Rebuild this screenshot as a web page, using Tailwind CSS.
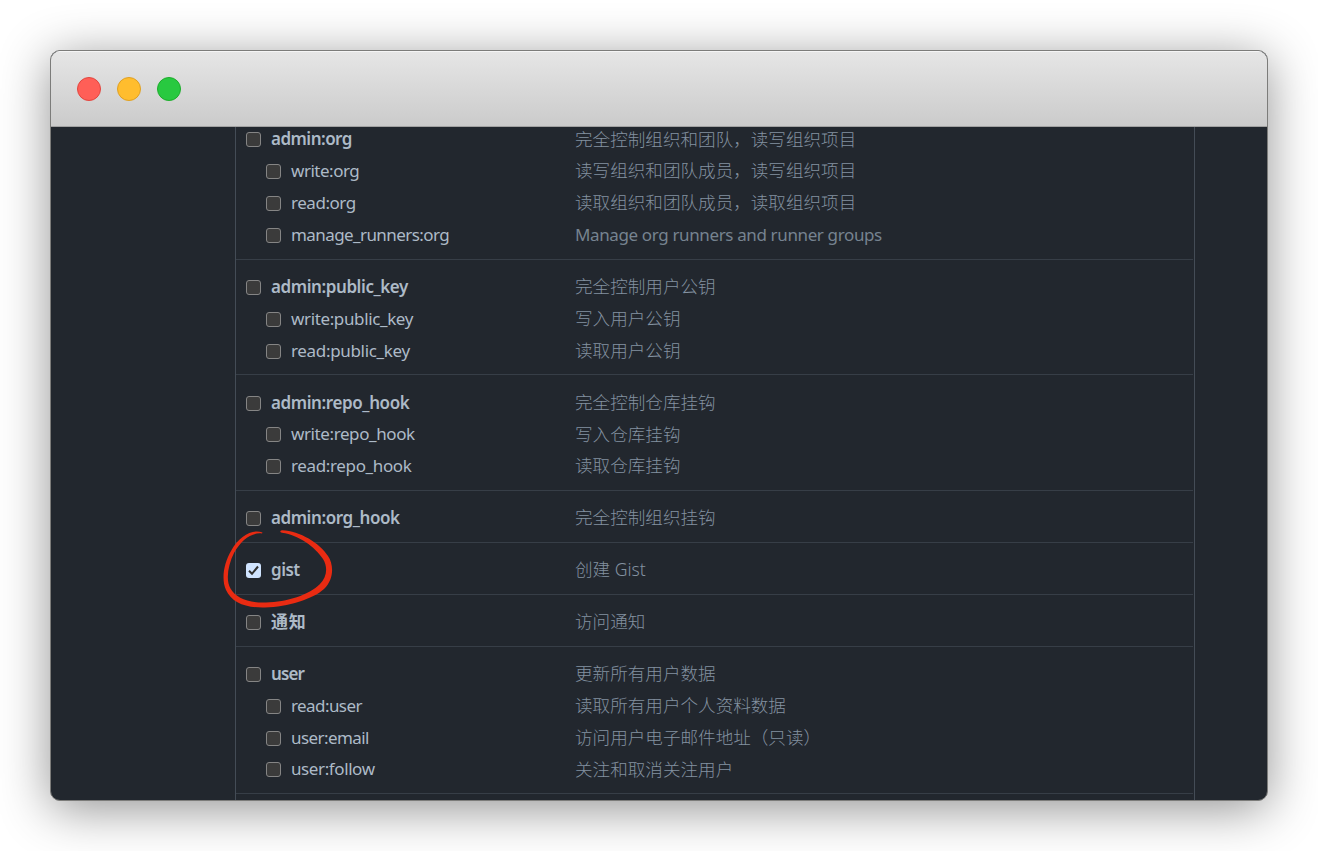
<!DOCTYPE html>
<html lang="zh-CN">
<head>
<meta charset="utf-8">
<title>Token scopes</title>
<script src="https://cdn.jsdelivr.net/npm/@tailwindcss/browser@4"></script>
</head>
<body class="relative h-[851px] w-[1318px] overflow-hidden bg-white p-[50px] font-['Noto_Sans','Noto_Sans_CJK_SC',sans-serif]">
<main class="flex h-[751px] w-[1218px] flex-col overflow-hidden rounded-[10px] border border-[#7c7c7a] bg-[#22272e] shadow-[0_8px_50px_rgba(0,0,0,0.43)]">
  <header class="flex h-[76px] shrink-0 items-center gap-4 border-b border-[#a2a2a2] bg-linear-to-b from-[#e6e6e6] to-[#cbcbcb] px-[26px] shadow-[inset_0_1px_0_#f5f5f5]">
    <span class="size-6 rounded-full border border-[#e2463f] bg-[#ff5f57]"></span>
    <span class="size-6 rounded-full border border-[#dfa023] bg-[#ffbd2e]"></span>
    <span class="size-6 rounded-full border border-[#1dad2b] bg-[#28c940]"></span>
  </header>
  <div class="min-h-0 flex-1 overflow-hidden pl-[184px]">
    <div id="scopes" class="flex h-full w-[960px] flex-col overflow-hidden border-x border-[#444c56] pr-px"></div>
  </div>
</main>
<svg class="absolute left-[220px] top-[524px]" width="116" height="88" viewBox="220 524 116 88" fill="#e92b12">
  <path d="M262.500 532.500C253 528.500 239 536 231 551C224 563 221 579 226 590C232 603 246 608 265 607.500C288 607 313 599 324 589C334 579 334 565 328 556C320 543 300 531 282 530.200C280 530.500 279.500 532.500 282 532.700C299 535 315 547 323 559C328 567 327 577 320 584C309 595 287 602 266 602.500C248 603 236 598 230.500 588.500C225.500 580 228 565 234 553C241 540 252 532 262 533.500Z"/>
</svg>
<script>
// [scope, letter spacing in px, description]
const groups = [
  [['admin:org',-.52,'完全控制组织和团队，读写组织项目'],['write:org',-.48,'读写组织和团队成员，读写组织项目'],['read:org',-.47,'读取组织和团队成员，读取组织项目'],['manage_runners:org',-.58,'Manage org runners and runner groups']],
  [['admin:public_key',-.42,'完全控制用户公钥'],['write:public_key',-.37,'写入用户公钥'],['read:public_key',-.33,'读取用户公钥']],
  [['admin:repo_hook',-.4,'完全控制仓库挂钩'],['write:repo_hook',-.4,'写入仓库挂钩'],['read:repo_hook',-.36,'读取仓库挂钩']],
  [['admin:org_hook',-.43,'完全控制组织挂钩']],
  [['gist',-.5,'创建 Gist']],
  [['通知',.8,'访问通知']],
  [['user',-.85,'更新所有用户数据'],['read:user',-.58,'读取所有用户个人资料数据'],['user:email',-.58,'访问用户电子邮件地址（只读）'],['user:follow',-.4,'关注和取消关注用户']]
];
const empty = '<span class="mt-0.5 size-[15px] shrink-0 rounded-[3px] border border-[#858585] bg-[#3b3b3b]"></span>';
const checked = '<span class="mt-0.5 flex size-[15px] shrink-0 items-center justify-center rounded-[3px] bg-[#d0e4ff]"><svg width="15" height="15" viewBox="0 0 15 15" fill="none" stroke="#303030" stroke-width="2"><path d="M3 7.800L6 10.800L12 3.500"/></svg></span>';
document.getElementById('scopes').innerHTML = groups.map((g, gi) =>
  '<section class="shrink-0 border-b border-[#373e47] ' + (gi ? 'pt-[11.3px] pb-[7.95px]' : '-mt-[14.25px] pt-[10.7px] pb-[8.55px]') + '">' +
  g.map(([name, spacing, text], i) =>
    '<div class="flex h-[31.75px] items-center">' +
    '<label class="mb-px flex w-[339px] shrink-0 items-center gap-2.5 text-[17px] text-[#adbac7] ' + (i ? 'pl-[30px]' : 'pl-2.5 font-semibold') + '">' +
    (name === 'gist' ? checked : empty) + '<span class="whitespace-nowrap leading-none" style="letter-spacing:' + spacing + 'px">' + name + '</span></label>' +
    '<span class="whitespace-nowrap leading-none ' + (/^M/.test(text) ? 'text-[17px] tracking-[-0.37px] text-[#768390]' : 'text-[17.58px] font-light text-[#8391a0]') + '">' + text + '</span></div>').join('') +
  '</section>').join('');
</script>
</body>
</html>
